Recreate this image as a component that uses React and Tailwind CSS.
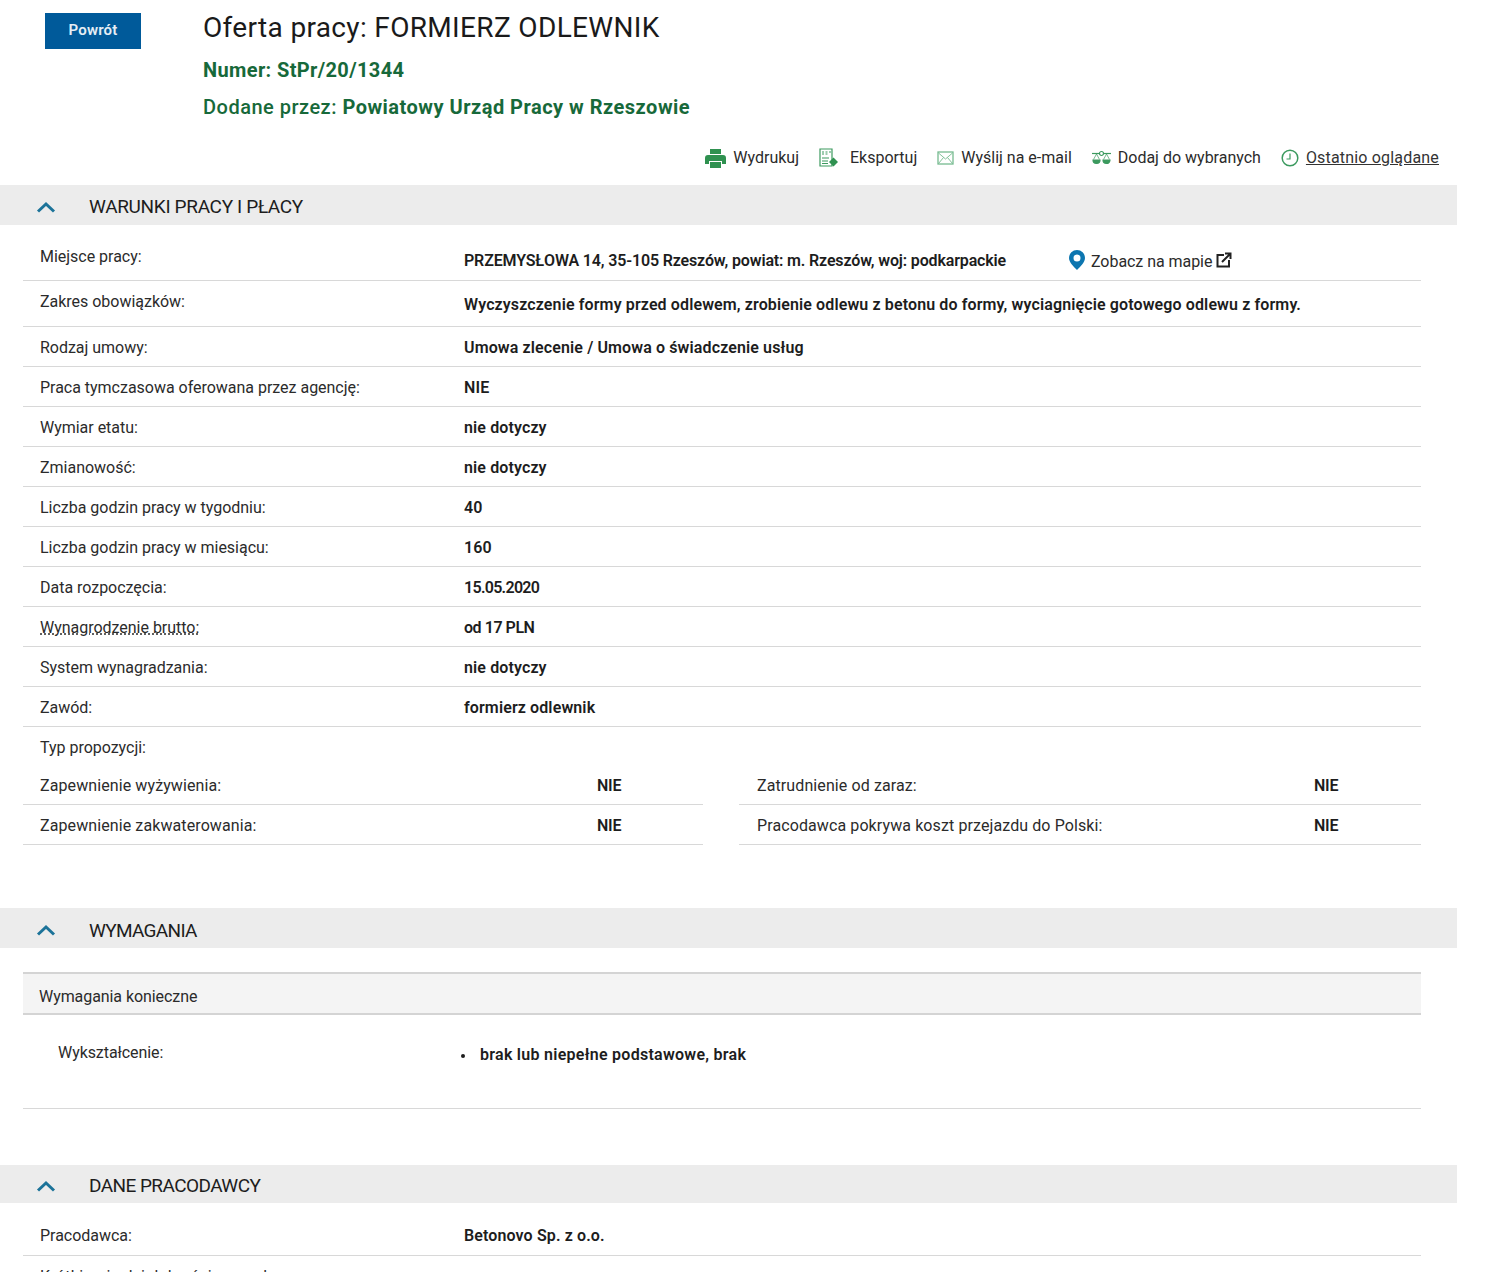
import React from "react";

const FONT = "font-['Roboto','Liberation_Sans',sans-serif]";

const ROWS = [
  { label: "Rodzaj umowy:", value: "Umowa zlecenie / Umowa o świadczenie usług" },
  { label: "Praca tymczasowa oferowana przez agencję:", value: "NIE" },
  { label: "Wymiar etatu:", value: "nie dotyczy" },
  { label: "Zmianowość:", value: "nie dotyczy" },
  { label: "Liczba godzin pracy w tygodniu:", value: "40" },
  { label: "Liczba godzin pracy w miesiącu:", value: "160" },
  { label: "Data rozpoczęcia:", value: "15.05.2020", valueClass: "tracking-[-0.7px]" },
  { label: "Wynagrodzenie brutto:", value: "od 17 PLN", dotted: true, valueClass: "tracking-[-0.45px]" },
  { label: "System wynagradzania:", value: "nie dotyczy" },
  { label: "Zawód:", value: "formierz odlewnik" },
];

function Chevron() {
  return (
    <svg width="20" height="12" viewBox="0 0 20 12" className="shrink-0">
      <path d="M2 10.500 L10 3 L18 10.500" fill="none" stroke="#1c7399" strokeWidth="3" />
    </svg>
  );
}

function SectionHeader({ title, tracking, className = "h-10" }) {
  return (
    <div className={`flex w-[1457px] items-center bg-[#ececec] pl-[36px] pt-[4px] ${className}`}>
      <Chevron />
      <h2 className={`ml-[33px] text-[19px] text-[#1d1d1d] ${tracking}`}>{title}</h2>
    </div>
  );
}

function Row({ label, value, dotted, valueClass = "tracking-[0.12px]" }) {
  return (
    <div className="flex h-10 items-center border-b border-[#d8d8d8] pl-[17px] pt-[2px] text-[16px]">
      <div className="w-[424px] tracking-[-0.02px] text-[#2b2b2b]">
        {dotted ? <span className="underline decoration-dotted">{label}</span> : label}
      </div>
      <div className={`font-semibold text-[#1d1d1d] ${valueClass}`}>{value}</div>
    </div>
  );
}

function HalfRow({ label, value, className = "" }) {
  return (
    <div className={`flex items-center border-b border-[#d8d8d8] text-[16px] ${className}`}>
      <div className="w-[557px] tracking-[0.1px] text-[#2b2b2b]">{label}</div>
      <div className="font-semibold tracking-[-0.2px] text-[#1d1d1d]">{value}</div>
    </div>
  );
}

function PrinterIcon() {
  return (
    <svg width="21" height="19" viewBox="0 0 21 19" fill="#2f9150">
      <path d="M5 0h11v5H5z" />
      <path d="M3 6h15a3 3 0 0 1 3 3v6h-4v-3H4v3H0V9a3 3 0 0 1 3-3z" />
      <path d="M5 13h11v6H5z" />
    </svg>
  );
}

function ExportIcon() {
  return (
    <svg width="20" height="20" viewBox="0 0 20 20" fill="none" stroke="#3c9a5f" strokeWidth="1.200">
      <path d="M1 1h12v17H1z" />
      <path d="M3 4h2M3 6h2M6.500 4h2M6.500 6h2M10 4h2M3 10h7M3 13h6M3 15.500h6" />
      <path d="M14.500 9.500 19 14l-4.500 4.500L10 14z" fill="#2f9150" stroke="none" />
    </svg>
  );
}

function MailIcon() {
  return (
    <svg width="17" height="14" viewBox="0 0 17 14" fill="none" stroke="#76bb90" strokeWidth="1.300">
      <rect x="1" y="1" width="15" height="12" />
      <path d="M1.500 2 8.500 8l7-6M1.500 12.500l5-6M15.500 12.500l-5-6" strokeWidth="0.900" />
    </svg>
  );
}

function ScalesIcon() {
  return (
    <svg width="19" height="16" viewBox="0 0 19 16" fill="none" stroke="#3c9a5f" strokeWidth="1.200">
      <path d="M0 3.500h19" />
      <circle cx="9.500" cy="3.500" r="2" fill="#fff" />
      <path d="M1.500 9.500 4.500 4l3 5.500M11.500 9.500l3-5.500 3 5.500" strokeWidth="0.700" />
      <path d="M1 10h7a3.500 3.500 0 0 1-7 0zM11 10h7a3.500 3.500 0 0 1-7 0z" fill="#3c9a5f" />
    </svg>
  );
}

function ClockIcon() {
  return (
    <svg width="18" height="18" viewBox="0 0 18 18" fill="none" stroke="#3c9a5f" strokeWidth="1.500">
      <circle cx="9" cy="9" r="7.800" />
      <path d="M9 4.500V10H5.500" strokeWidth="1.200" />
    </svg>
  );
}

function PinIcon() {
  return (
    <svg width="16" height="20" viewBox="0 0 16 20">
      <path
        fillRule="evenodd"
        fill="#0d76b0"
        d="M8 0a8 8 0 0 1 8 8c0 4.500-5 9-8 12C5 17 0 12.500 0 8a8 8 0 0 1 8-8zm0 4.500a3.500 3.500 0 1 0 0 7 3.500 3.500 0 0 0 0-7z"
      />
    </svg>
  );
}

function ExternalIcon() {
  return (
    <svg width="16" height="16" viewBox="0 0 16 16" fill="none" stroke="#222" strokeWidth="2">
      <path d="M8 3H1.500v11.500H13V8" />
      <path d="M6 10 14 2M9 1.500h5.500V7" />
    </svg>
  );
}

function Action({ icon, label, gap = "gap-[7px]", underline }) {
  return (
    <div className={`flex items-center ${gap}`}>
      {icon}
      <span className={underline ? "tracking-[0.18px] text-[#333] underline" : "text-[#2b2b2b]"}>{label}</span>
    </div>
  );
}

export default function App() {
  return (
    <div className={`h-[1272px] w-[1500px] overflow-hidden bg-white ${FONT}`}>
      {/* Header */}
      <div className="flex h-[185px] flex-col">
        <div className="flex pl-[45px] pt-[13px]">
          <button className="h-9 w-[96px] pb-[2px] text-[15px] font-semibold tracking-[0.2px] bg-[#005a9a] text-[#e6eef5]">Powrót</button>
          <div className="ml-[62px]">
            <h1 className="text-[28px] leading-[30px] tracking-[0.34px] text-[#1a1a1a]">Oferta pracy: FORMIERZ ODLEWNIK</h1>
            <p className="mt-[14px] text-[20px] leading-[26px] font-bold tracking-[0.37px] text-[#17693a]">Numer: StPr/20/1344</p>
            <p className="mt-[11px] text-[20px] leading-[26px] font-medium tracking-[0.49px] text-[#17693a]">
              Dodane przez: <span className="font-bold">Powiatowy Urząd Pracy w Rzeszowie</span>
            </p>
          </div>
        </div>
        <div className="mt-[26px] flex w-[1439px] justify-end gap-[20px] text-[16px]">
          <Action icon={<PrinterIcon />} label="Wydrukuj" />
          <Action icon={<ExportIcon />} label="Eksportuj" gap="gap-[11px]" />
          <Action icon={<MailIcon />} label="Wyślij na e-mail" />
          <Action icon={<ScalesIcon />} label="Dodaj do wybranych" />
          <Action icon={<ClockIcon />} label="Ostatnio oglądane" underline />
        </div>
      </div>

      {/* Warunki pracy */}
      <SectionHeader title="WARUNKI PRACY I PŁACY" tracking="tracking-[-0.33px]" />
      <div className="ml-[23px] w-[1398px]">
        <div className="flex h-[56px] items-center border-b border-[#d8d8d8] pl-[17px] pt-[16px] text-[16px]">
          <div className="mb-[8px] w-[424px] tracking-[-0.02px] text-[#2b2b2b]">Miejsce pracy:</div>
          <div className="w-[605px] font-semibold tracking-[-0.15px] text-[#1d1d1d]">PRZEMYSŁOWA 14, 35-105 Rzeszów, powiat: m. Rzeszów, woj: podkarpackie</div>
          <div className="-mt-[1px] flex items-center gap-[4px] text-[#2b2b2b]">
            <PinIcon />
            <span className="ml-[2px] mt-[4px] tracking-[-0.05px]">Zobacz na mapie</span>
            <ExternalIcon />
          </div>
        </div>
        <div className="flex h-[46px] items-center border-b border-[#d8d8d8] pl-[17px] pt-[2px] text-[16px]">
          <div className="mb-[5px] w-[424px] tracking-[-0.02px] text-[#2b2b2b]">Zakres obowiązków:</div>
          <div className="font-semibold tracking-[0.12px] text-[#1d1d1d]">Wyczyszczenie formy przed odlewem, zrobienie odlewu z betonu do formy, wyciagnięcie gotowego odlewu z formy.</div>
        </div>
        {ROWS.map(row => (
          <Row key={row.label} {...row} />
        ))}
        <div className="flex h-[40px] items-center pl-[17px] pt-[2px] text-[16px] tracking-[-0.02px] text-[#2b2b2b]">Typ propozycji:</div>
        <div className="grid grid-cols-[680px_682px] gap-x-[36px]">
          <HalfRow className="h-[38px] pl-[17px]" label="Zapewnienie wyżywienia:" value="NIE" />
          <HalfRow className="h-[38px] pl-[18px]" label="Zatrudnienie od zaraz:" value="NIE" />
          <HalfRow className="h-10 pl-[17px] pt-[2px]" label="Zapewnienie zakwaterowania:" value="NIE" />
          <HalfRow className="h-10 pl-[18px] pt-[2px]" label="Pracodawca pokrywa koszt przejazdu do Polski:" value="NIE" />
        </div>
      </div>

      {/* Wymagania */}
      <div className="mt-[63px]">
        <SectionHeader title="WYMAGANIA" tracking="tracking-[-0.68px]" className="h-10 [&>h2]:mt-[2px]" />
      </div>
      <div className="ml-[23px] mt-[24px] w-[1398px]">
        <div className="flex h-[43px] items-center border-y-2 border-[#d4d4d4] bg-[#f4f4f4] pl-[16px] pt-[6px] text-[16px] tracking-[-0.07px] text-[#2b2b2b]">Wymagania konieczne</div>
        <div className="flex h-[94px] border-b border-[#d8d8d8] pl-[35px] pt-[28px] text-[16px]">
          <div className="-mt-[2px] w-[403px] tracking-[-0.07px] text-[#2b2b2b]">Wykształcenie:</div>
          <div className="flex items-start font-semibold tracking-[0.27px] text-[#1d1d1d]">
            <span className="mr-[15px] mt-[11px] h-[4px] w-[4px] rounded-full bg-[#1d1d1d]" />
            brak lub niepełne podstawowe, brak
          </div>
        </div>
      </div>

      {/* Dane pracodawcy */}
      <div className="mt-[56px]">
        <SectionHeader title="DANE PRACODAWCY" tracking="tracking-[-0.57px]" className="h-[38px]" />
      </div>
      <div className="ml-[23px] w-[1398px]">
        <div className="flex h-[53px] items-center border-b border-[#d8d8d8] pl-[17px] pt-[14px] text-[16px]">
          <div className="w-[424px] tracking-[-0.02px] text-[#2b2b2b]">Pracodawca:</div>
          <div className="font-semibold tracking-[0.12px] text-[#1d1d1d]">Betonovo Sp. z o.o.</div>
        </div>
        <div className="pl-[17px] pt-[9px] text-[16px] tracking-[0.3px] text-[#2b2b2b]">Krótki opis działalności pracodawcy:</div>
      </div>
    </div>
  );
}
